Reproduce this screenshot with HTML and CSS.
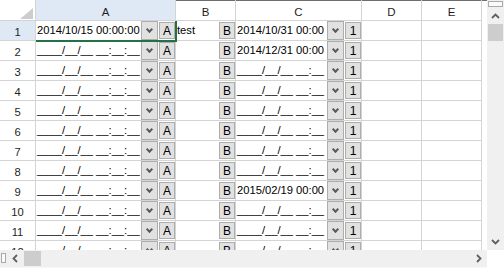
FILE: index.html
```html
<!DOCTYPE html>
<html>
<head>
<meta charset="utf-8">
<link rel="stylesheet" href="styles.css">
</head>
<body>
<div class="sheet">
  <div class="main">
    <div class="grid">
      <div class="corner-cell"></div>
      <div class="hdr sel">A</div>
      <div class="hdr">B</div>
      <div class="hdr">C</div>
      <div class="hdr">D</div>
      <div class="hdr">E</div>
      <div class="hdr fill"></div>

      <div class="rh sel">1</div>
      <div class="cell active"><span class="val">2014/10/15 00:00:00</span><span class="dd"></span><span class="btn">A</span></div>
      <div class="cell"><span class="val">test</span><span class="btn">B</span></div>
      <div class="cell"><span class="val">2014/10/31 00:00</span><span class="dd"></span><span class="btn">1</span></div>
      <div></div><div></div><div class="fill"></div>

      <div class="rh">2</div>
      <div class="cell"><span class="val">____/__/__ __:__:__</span><span class="dd"></span><span class="btn">A</span></div>
      <div class="cell"><span class="val"></span><span class="btn">B</span></div>
      <div class="cell"><span class="val">2014/12/31 00:00</span><span class="dd"></span><span class="btn">1</span></div>
      <div></div><div></div><div class="fill"></div>

      <div class="rh">3</div>
      <div class="cell"><span class="val">____/__/__ __:__:__</span><span class="dd"></span><span class="btn">A</span></div>
      <div class="cell"><span class="val"></span><span class="btn">B</span></div>
      <div class="cell"><span class="val">____/__/__ __:__</span><span class="dd"></span><span class="btn">1</span></div>
      <div></div><div></div><div class="fill"></div>

      <div class="rh">4</div>
      <div class="cell"><span class="val">____/__/__ __:__:__</span><span class="dd"></span><span class="btn">A</span></div>
      <div class="cell"><span class="val"></span><span class="btn">B</span></div>
      <div class="cell"><span class="val">____/__/__ __:__</span><span class="dd"></span><span class="btn">1</span></div>
      <div></div><div></div><div class="fill"></div>

      <div class="rh">5</div>
      <div class="cell"><span class="val">____/__/__ __:__:__</span><span class="dd"></span><span class="btn">A</span></div>
      <div class="cell"><span class="val"></span><span class="btn">B</span></div>
      <div class="cell"><span class="val">____/__/__ __:__</span><span class="dd"></span><span class="btn">1</span></div>
      <div></div><div></div><div class="fill"></div>

      <div class="rh">6</div>
      <div class="cell"><span class="val">____/__/__ __:__:__</span><span class="dd"></span><span class="btn">A</span></div>
      <div class="cell"><span class="val"></span><span class="btn">B</span></div>
      <div class="cell"><span class="val">____/__/__ __:__</span><span class="dd"></span><span class="btn">1</span></div>
      <div></div><div></div><div class="fill"></div>

      <div class="rh">7</div>
      <div class="cell"><span class="val">____/__/__ __:__:__</span><span class="dd"></span><span class="btn">A</span></div>
      <div class="cell"><span class="val"></span><span class="btn">B</span></div>
      <div class="cell"><span class="val">____/__/__ __:__</span><span class="dd"></span><span class="btn">1</span></div>
      <div></div><div></div><div class="fill"></div>

      <div class="rh">8</div>
      <div class="cell"><span class="val">____/__/__ __:__:__</span><span class="dd"></span><span class="btn">A</span></div>
      <div class="cell"><span class="val"></span><span class="btn">B</span></div>
      <div class="cell"><span class="val">____/__/__ __:__</span><span class="dd"></span><span class="btn">1</span></div>
      <div></div><div></div><div class="fill"></div>

      <div class="rh">9</div>
      <div class="cell"><span class="val">____/__/__ __:__:__</span><span class="dd"></span><span class="btn">A</span></div>
      <div class="cell"><span class="val"></span><span class="btn">B</span></div>
      <div class="cell"><span class="val">2015/02/19 00:00</span><span class="dd"></span><span class="btn">1</span></div>
      <div></div><div></div><div class="fill"></div>

      <div class="rh">10</div>
      <div class="cell"><span class="val">____/__/__ __:__:__</span><span class="dd"></span><span class="btn">A</span></div>
      <div class="cell"><span class="val"></span><span class="btn">B</span></div>
      <div class="cell"><span class="val">____/__/__ __:__</span><span class="dd"></span><span class="btn">1</span></div>
      <div></div><div></div><div class="fill"></div>

      <div class="rh">11</div>
      <div class="cell"><span class="val">____/__/__ __:__:__</span><span class="dd"></span><span class="btn">A</span></div>
      <div class="cell"><span class="val"></span><span class="btn">B</span></div>
      <div class="cell"><span class="val">____/__/__ __:__</span><span class="dd"></span><span class="btn">1</span></div>
      <div></div><div></div><div class="fill"></div>

      <div class="rh">12</div>
      <div class="cell"><span class="val">____/__/__ __:__:__</span><span class="dd"></span><span class="btn">A</span></div>
      <div class="cell"><span class="val"></span><span class="btn">B</span></div>
      <div class="cell"><span class="val">____/__/__ __:__</span><span class="dd"></span><span class="btn">1</span></div>
      <div></div><div></div><div class="fill"></div>
    </div>
    <div class="vscroll">
      <div class="vsplit"></div>
      <div class="varrow"><svg width="9" height="6" viewBox="0 0 9 6"><path d="M1 5 L4.5 1.5 L8 5" fill="none" stroke="#606060" stroke-width="1.8"/></svg></div>
      <div class="vthumb"></div>
      <div class="spacer"></div>
      <div class="varrow"><svg width="9" height="6" viewBox="0 0 9 6"><path d="M1 1 L4.5 4.5 L8 1" fill="none" stroke="#606060" stroke-width="1.8"/></svg></div>
    </div>
  </div>
  <div class="bottom">
    <div class="hscroll">
      <div class="hsplit"></div>
      <div class="harrow left"><svg width="6" height="9" viewBox="0 0 6 9"><path d="M5 1 L1.5 4.5 L5 8" fill="none" stroke="#606060" stroke-width="1.8"/></svg></div>
      <div class="hthumb"></div>
      <div class="spacer"></div>
      <div class="harrow right"><svg width="6" height="9" viewBox="0 0 6 9"><path d="M1 1 L4.5 4.5 L1 8" fill="none" stroke="#606060" stroke-width="1.8"/></svg></div>
    </div>
    <div class="sizer"></div>
  </div>
</div>
</body>
</html>
```

FILE: styles.css
```css
body {
  margin: 0;
  background: #fff;
  font-family: "Liberation Sans", Arial, sans-serif;
  font-size: 11.2px;
  color: #000;
}

.sheet {
  width: 504px;
  height: 268px;
  display: flex;
  flex-direction: column;
  overflow: hidden;
}

.main {
  display: flex;
  height: 250px;
}

.grid {
  flex: 1;
  display: grid;
  grid-template-columns: 36px 140px 60px 126px 60px 60px 1fr;
  grid-template-rows: 21px;
  grid-auto-rows: 20px;
  overflow: hidden;
}

.grid > div {
  box-sizing: border-box;
  border-right: 1px solid #d4d4d4;
  border-bottom: 1px solid #d4d4d4;
  min-width: 0;
}

.grid > .fill {
  border-right: none;
  border-bottom: none;
}

.corner-cell {
  position: relative;
}

.corner-cell::after {
  content: "";
  position: absolute;
  right: 2px;
  bottom: 1px;
  width: 13px;
  height: 11px;
  background: #cdcdcd;
  clip-path: polygon(100% 0, 100% 100%, 0 100%);
}

.hdr {
  display: flex;
  align-items: center;
  justify-content: center;
  padding-top: 4px;
  font-size: 11.5px;
  color: #1e1e1e;
  box-shadow: inset 0 1px 0 #6e6e6e;
}

.hdr.sel {
  background: #dfe9f5;
  box-shadow: none;
}

.rh {
  display: flex;
  align-items: center;
  justify-content: center;
  padding-top: 2px;
  color: #1e1e1e;
}

.rh.sel {
  background: #dfe9f5;
}

.cell {
  display: flex;
  align-items: center;
  position: relative;
}

.val {
  flex: 1;
  min-width: 0;
  white-space: nowrap;
  overflow: hidden;
  padding-left: 1px;
  padding-bottom: 2px;
}

.dd {
  flex: none;
  align-self: stretch;
  width: 17px;
  box-sizing: border-box;
  margin-right: 1px;
  border: 1px solid #adadad;
  background: #e1e1e1;
  display: flex;
  align-items: center;
  justify-content: center;
}

.dd::before {
  content: "";
  width: 3px;
  height: 3px;
  border-right: 2px solid #5a5a5a;
  border-bottom: 2px solid #5a5a5a;
  transform: rotate(45deg);
  margin-top: -3px;
}

.btn {
  flex: none;
  width: 16px;
  height: 17px;
  box-sizing: border-box;
  border: 1px solid #adadad;
  background: #e1e1e1;
  display: flex;
  align-items: center;
  justify-content: center;
  font-size: 12px;
  line-height: 1;
  color: #000;
}

.cell.active::after {
  content: "";
  position: absolute;
  left: 0;
  top: 0;
  right: -2px;
  bottom: -2px;
  border-right: 2px solid #217346;
  border-bottom: 2px solid #217346;
  pointer-events: none;
  z-index: 2;
}

.vscroll {
  width: 17px;
  flex: none;
  background: #f0f0f0;
  display: flex;
  flex-direction: column;
}

.vsplit {
  height: 6px;
  margin: 1px 1px 0;
  box-sizing: border-box;
  border: 1px solid #a9a9a9;
  background: #fafafa;
}

.varrow {
  height: 17px;
  display: flex;
  align-items: center;
  justify-content: center;
  flex: none;
}

.vthumb {
  height: 17px;
  margin: 0 1px;
  background: #cdcdcd;
  flex: none;
}

.spacer {
  flex: 1;
}

.bottom {
  display: flex;
  height: 18px;
}

.hscroll {
  flex: 1;
  display: flex;
  background: #f0f0f0;
  border-bottom: 1px solid #f7f7f7;
}

.hsplit {
  width: 5px;
  height: 10px;
  margin: 3px 0 0 1px;
  box-sizing: border-box;
  border: 1px solid #a9a9a9;
  background: #fafafa;
  flex: none;
}

.harrow {
  display: flex;
  align-items: center;
  justify-content: center;
  flex: none;
}

.harrow.left {
  width: 18px;
}

.harrow.right {
  width: 17px;
}

.hthumb {
  width: 17px;
  height: 15px;
  margin-top: 1px;
  background: #cdcdcd;
  flex: none;
}

.sizer {
  width: 17px;
  background: #fff;
}
```
